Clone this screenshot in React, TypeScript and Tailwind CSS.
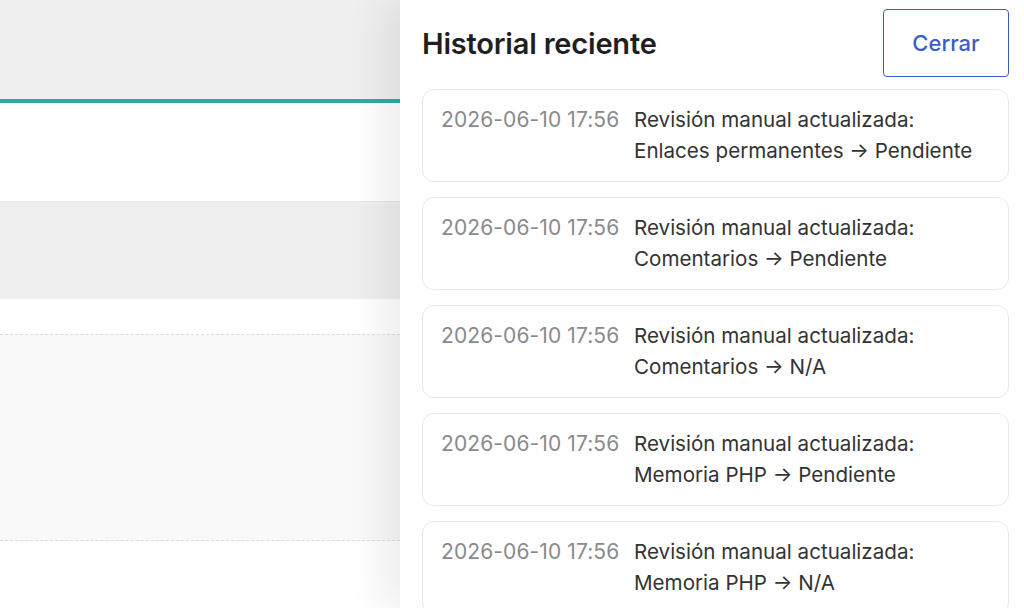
import React from "react";

const items = [
  "Enlaces permanentes → Pendiente",
  "Comentarios → Pendiente",
  "Comentarios → N/A",
  "Memoria PHP → Pendiente",
  "Memoria PHP → N/A",
];

export default function App() {
  return (
    <div
      className="flex h-[608px] w-[1024px] overflow-hidden bg-white"
      style={{ fontFamily: 'Inter, "Noto Sans", sans-serif' }}
    >
      <div className="flex w-[400px] shrink-0 flex-col">
        <div className="h-[99px] bg-[#efefef]" />
        <div className="h-[4px] bg-[#2badA7]" />
        <div className="h-[98px] bg-white" />
        <div className="h-[98px] border-t border-[#e6e6e6] bg-[#efefef]" />
        <div className="h-[35px] bg-white" />
        <div className="h-[207px] border-y border-dashed border-[#dcdcdc] bg-[#f9f9f9]" />
        <div className="flex-1 bg-white" />
      </div>
      <div className="relative flex flex-1 flex-col bg-white pl-[22px] pr-[15px] shadow-[-18px_0_36px_rgba(0,0,0,0.07)]">
        <div className="flex items-center justify-between pt-[9px]">
          <h2 className="pt-[1px] text-[29px] font-semibold tracking-[-0.2px] text-[#1f1f1f]">
            Historial reciente
          </h2>
          <button className="flex h-[68px] w-[126px] items-center justify-center rounded-[4px] border-[1.5px] border-[#3b5ccc] text-[22px] font-medium text-[#3b5ccc]">
            Cerrar
          </button>
        </div>
        <div className="mt-[12px] flex flex-col gap-[15px]">
          {items.map((t, i) => (
            <div
              key={i}
              className="flex rounded-[12px] border border-[#e8e8e8] px-[18px] pb-[15px] pt-[14px] leading-[31px]"
            >
              <span className="w-[193px] shrink-0 text-[21px] tracking-[0.1px] text-[#8a8a8a]">
                2026-06-10 17:56
              </span>
              <span className="text-[20.6px] text-[#333]">
                Revisión manual actualizada:
                <br />
                {t}
              </span>
            </div>
          ))}
        </div>
      </div>
    </div>
  );
}
